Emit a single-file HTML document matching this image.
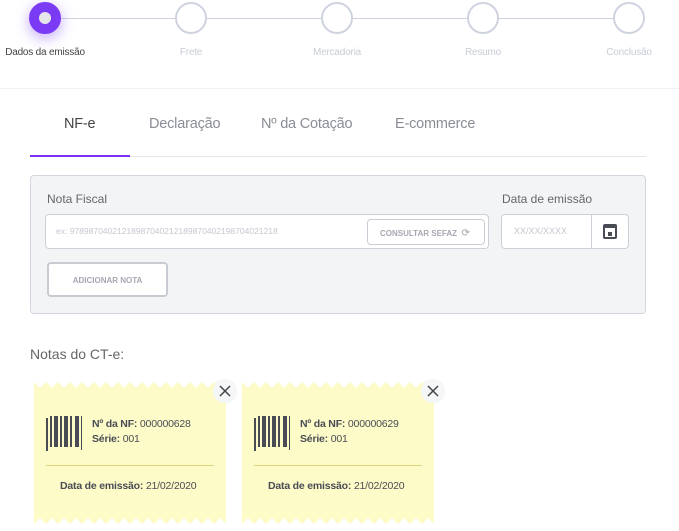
<!DOCTYPE html>
<html><head><meta charset="utf-8"><style>
*{box-sizing:border-box;margin:0;padding:0}
body{width:679px;height:531px;background:#fff;font-family:"Liberation Sans",sans-serif;position:relative;overflow:hidden;color:#555}
.a{position:absolute}
.line{position:absolute;top:18px;height:1px;background:#cfd3df}
.c{position:absolute;width:32px;height:32px;border-radius:50%;border:2px solid #cfd3df;background:#fff;top:2px}
.lbl{position:absolute;top:47px;font-size:10px;color:#c8ccd6;width:120px;text-align:center;letter-spacing:-0.2px}
.tab{position:absolute;top:116px;font-size:14.5px;color:#8a8d96;letter-spacing:-0.2px}
.tk{position:absolute;width:192px;height:142px;background:#fdfbc8;top:382px}
.zz{position:absolute;left:0;width:100%;height:8px}
.bold{font-weight:bold;color:#4a4c55}
.t{font-size:10.5px;color:#4a4c55;letter-spacing:-0.2px}
</style></head><body>
<div class="line" style="left:45px;width:584px"></div>
<div class="c" style="left:29px;background:#7b3bf5;border-color:#7b3bf5;box-shadow:0 4px 14px rgba(123,59,245,.45)"><div class="a" style="left:8px;top:8px;width:12px;height:12px;border-radius:50%;background:#e6e6ea"></div></div>
<div class="c" style="left:175px"></div>
<div class="c" style="left:321px"></div>
<div class="c" style="left:467px"></div>
<div class="c" style="left:613px"></div>
<div class="lbl" style="left:-15px;color:#444">Dados da emissão</div>
<div class="lbl" style="left:131px">Frete</div>
<div class="lbl" style="left:277px">Mercadoria</div>
<div class="lbl" style="left:423px">Resumo</div>
<div class="lbl" style="left:569px">Conclusão</div>
<div class="a" style="left:0;top:88px;width:679px;height:1px;background:#f0f0f2"></div>
<div class="tab" style="left:64px;color:#444">NF-e</div>
<div class="tab" style="left:149px">Declaração</div>
<div class="tab" style="left:261px">Nº da Cotação</div>
<div class="tab" style="left:395px">E-commerce</div>
<div class="a" style="left:30px;top:156px;width:616px;height:1px;background:#e4e5e8"></div>
<div class="a" style="left:30px;top:155px;width:100px;height:2px;background:#7b2ff7"></div>

<div class="a" style="left:30px;top:175px;width:616px;height:139px;background:#f3f4f6;border:1px solid #d3d6dd;border-radius:4px">
 <div class="a" style="left:16px;top:16px;font-size:12px;color:#666">Nota Fiscal</div>
 <div class="a" style="left:471px;top:16px;font-size:12px;color:#666">Data de emissão</div>
 <div class="a" style="left:14px;top:38px;width:444px;height:35px;background:#fff;border:1px solid #ccd0d8;border-radius:4px">
  <div class="a" style="left:10px;top:11px;font-size:8.5px;color:#c4c7d0">ex: 978987040212189870402121898704021987040212​18</div>
  <div class="a" style="left:321px;top:4px;width:118px;height:26px;border:1px solid #c8ccd4;border-radius:4px;font-size:8px;font-weight:bold;color:#a5a8b0;padding:8px 0 0 12px">CONSULTAR SEFAZ &nbsp;<span style="color:#bbb;font-size:10px">⟳</span></div>
 </div>
 <div class="a" style="left:470px;top:38px;width:128px;height:35px;background:#fff;border:1px solid #ccd0d8;border-radius:4px">
  <div class="a" style="left:12px;top:11px;font-size:9px;color:#c4c7d0">XX/XX/XXXX</div>
  <div class="a" style="left:89px;top:0;width:1px;height:33px;background:#ccd0d8"></div>
  <div class="a" style="left:101px;top:9px;width:14px;height:15px;border:2px solid #4a4c55;border-top-width:4px;border-radius:2px"><div class="a" style="left:3px;top:4px;width:4px;height:4px;background:#4a4c55"></div></div>
 </div>
 <div class="a" style="left:16px;top:86px;width:121px;height:35px;background:#fff;border:2px solid #c8cbd2;border-radius:4px;font-size:8px;font-weight:bold;color:#a5a8b0;text-align:center;padding-top:12px">ADICIONAR NOTA</div>
</div>

<div class="a" style="left:30px;top:346px;font-size:14px;color:#666">Notas do CT-e:</div>

<svg width="0" height="0" style="position:absolute"><defs>
<pattern id="z" width="12" height="8" patternUnits="userSpaceOnUse"><polygon points="0,0 12,0 6,6" fill="#fff"/></pattern>
<pattern id="zb" width="12" height="8" patternUnits="userSpaceOnUse"><polygon points="0,8 12,8 6,2" fill="#fff"/></pattern>
</defs></svg>

<div class="tk" style="left:34px">
 <svg class="zz" style="top:0" height="8" width="192"><rect width="192" height="8" fill="url(#z)"/></svg>
 <svg class="zz" style="bottom:0" height="8" width="192"><rect width="192" height="8" fill="url(#zb)"/></svg>
 <svg class="a" style="left:12px;top:34px" width="40" height="35"><g fill="#4a4c55"><rect x="0" y="2" width="2" height="33"/><rect x="4" y="0" width="2" height="31"/><rect x="8" y="0" width="4" height="31"/><rect x="14" y="0" width="2" height="31"/><rect x="18" y="0" width="4" height="31"/><rect x="24" y="0" width="2" height="31"/><rect x="29" y="0" width="4" height="31"/><rect x="35" y="0" width="1" height="34"/></g></svg>
 <div class="a t" style="left:58px;top:36px"><span class="bold">Nº da NF:</span> 000000628</div>
 <div class="a t" style="left:58px;top:51px"><span class="bold">Série:</span> 001</div>
 <div class="a" style="left:12px;top:83px;width:168px;height:1px;background:#dcd680"></div>
 <div class="a t" style="left:26px;top:98px"><span class="bold">Data de emissão:</span> 21/02/2020</div>
</div>
<div class="tk" style="left:242px">
 <svg class="zz" style="top:0" height="8" width="192"><rect width="192" height="8" fill="url(#z)"/></svg>
 <svg class="zz" style="bottom:0" height="8" width="192"><rect width="192" height="8" fill="url(#zb)"/></svg>
 <svg class="a" style="left:12px;top:34px" width="40" height="35"><g fill="#4a4c55"><rect x="0" y="2" width="2" height="33"/><rect x="4" y="0" width="2" height="31"/><rect x="8" y="0" width="4" height="31"/><rect x="14" y="0" width="2" height="31"/><rect x="18" y="0" width="4" height="31"/><rect x="24" y="0" width="2" height="31"/><rect x="29" y="0" width="4" height="31"/><rect x="35" y="0" width="1" height="34"/></g></svg>
 <div class="a t" style="left:58px;top:36px"><span class="bold">Nº da NF:</span> 000000629</div>
 <div class="a t" style="left:58px;top:51px"><span class="bold">Série:</span> 001</div>
 <div class="a" style="left:12px;top:83px;width:168px;height:1px;background:#dcd680"></div>
 <div class="a t" style="left:26px;top:98px"><span class="bold">Data de emissão:</span> 21/02/2020</div>
</div>
<div class="a" style="left:213px;top:379px;width:24px;height:24px;border-radius:50%;background:#f5f6f7"></div>
<svg class="a" style="left:219px;top:385px" width="12" height="12"><path d="M1 1L11 11M11 1L1 11" stroke="#444" stroke-width="1.5"/></svg>
<div class="a" style="left:421px;top:379px;width:24px;height:24px;border-radius:50%;background:#f5f6f7"></div>
<svg class="a" style="left:427px;top:385px" width="12" height="12"><path d="M1 1L11 11M11 1L1 11" stroke="#444" stroke-width="1.5"/></svg>
</body></html>
